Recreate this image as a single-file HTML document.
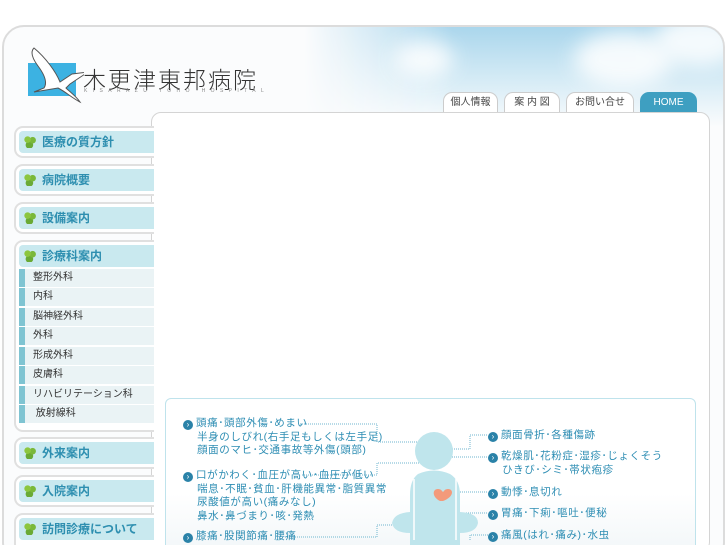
<!DOCTYPE html>
<html><head><meta charset="utf-8"><style>
*{margin:0;padding:0;box-sizing:border-box}
html,body{width:727px;height:545px;overflow:hidden}
body{background:#fff;font-family:"Liberation Sans","Noto Sans CJK JP",sans-serif;position:relative}
.frame{position:absolute;left:2px;top:25px;width:723px;height:540px;border:2px solid #dcdcdc;border-radius:22px;background:#fbfcfd;overflow:hidden}
.sky{position:absolute;left:300px;top:0;width:425px;height:100px;background:linear-gradient(180deg,#aad6ec 0%,#d3eaf5 50%,#fbfcfd 100%);-webkit-mask-image:linear-gradient(90deg,transparent 0,#000 35%);mask-image:linear-gradient(90deg,transparent 0,#000 35%)}
.cloud{position:absolute;border-radius:50%;background:#fff;filter:blur(10px);opacity:.85}
.logo{position:absolute;left:28px;top:63px;width:48px;height:33px;background:#3cb2e2}
.title{position:absolute;left:83px;top:61px;font-size:23px;letter-spacing:2px;color:#333;font-weight:300}
.sub{position:absolute;left:84px;top:88px;font-size:5px;letter-spacing:5.4px;color:#888}
.tab{position:absolute;top:92px;height:21px;border:1px solid #ccc;border-bottom:none;border-radius:9px 9px 0 0;background:#fff;font-size:10px;color:#444;text-align:center;line-height:20px}
.main{position:absolute;left:151px;top:112px;width:559px;height:440px;background:#fff;border:1px solid #d4d4d4;border-radius:10px}
.nav{position:absolute;left:14px;width:140px;border:2px solid #e0e0e0;border-right:none;border-radius:9px 0 0 9px;background:#fff;padding:3px 0 3px 3px}
.nav .h{height:22px;background:#c9e9ef;border-radius:4px 0 0 4px;color:#2e8fb0;font-weight:bold;font-size:12px;line-height:22px;padding-left:23px;position:relative}
.nav .h:before{content:"";position:absolute;left:5px;top:5px;width:12px;height:12px;background:radial-gradient(circle at 30% 30%,#8cc63f 3px,transparent 3.5px),radial-gradient(circle at 72% 35%,#7ab83a 3px,transparent 3.5px),radial-gradient(circle at 45% 75%,#6aaa35 3.5px,transparent 4px)}
.si{height:18px;margin-top:1.5px;background:#eaf3f5;border-left:6px solid #7fc4d2;font-size:10px;color:#333;line-height:18px;padding-left:8px}
.box{position:absolute;left:165px;top:398px;width:531px;height:160px;border:1.5px solid #bfe3ec;border-radius:6px;background:linear-gradient(180deg,#fff 60%,#f1f6f8)}
.t{position:absolute;font-size:10.5px;letter-spacing:.6px;color:#2d8db3;line-height:13.5px;white-space:nowrap}
.b{display:inline-block;width:10px;height:10px;border-radius:50%;background:#2a82a8;color:#fff;font-size:8px;line-height:10px;text-align:center;margin-right:3px;vertical-align:-1px;letter-spacing:0}
</style></head><body>
<div class="frame">
 <div class="sky"></div>
 <div class="cloud" style="left:570px;top:5px;width:100px;height:55px"></div>
 <div class="cloud" style="left:650px;top:-15px;width:90px;height:55px"></div>
 <div class="cloud" style="left:390px;top:15px;width:60px;height:35px"></div>
</div>
<div class="logo"></div>
<svg style="position:absolute;left:26px;top:44px" width="58" height="62" viewBox="0 0 58 62"><path d="M8 4 C4 8,6 14,12 22 C18 30,22 38,18 44 L8 48 L32 44 C40 48,46 54,54 58 C50 52,44 48,40 44 L44 40 L62 28 L46 30 L34 38 C30 28,20 14,8 4Z" fill="#fff" stroke="#555" stroke-width="1"/></svg>
<div class="title">木更津東邦病院</div>
<div class="sub">KISARAZU TOHO HOSPITAL</div>
<div class="tab" style="left:443px;width:55px">個人情報</div>
<div class="tab" style="left:504px;width:56px">案 内 図</div>
<div class="tab" style="left:566px;width:68px">お問い合せ</div>
<div class="tab" style="left:640px;width:57px;background:#3e9fc1;border-color:#3e9fc1;color:#fff">HOME</div>
<div class="main"></div>
<div class="nav" style="top:126px"><div class="h">医療の質方針</div></div>
<div class="nav" style="top:164px"><div class="h">病院概要</div></div>
<div class="nav" style="top:202px"><div class="h">設備案内</div></div>
<div class="nav" style="top:240px;height:192px"><div class="h">診療科案内</div>
<div class="si">整形外科</div><div class="si">内科</div><div class="si">脳神経外科</div><div class="si">外科</div><div class="si">形成外科</div><div class="si">皮膚科</div><div class="si">リハビリテーション科</div><div class="si">&nbsp;放射線科</div></div>
<div class="nav" style="top:437px"><div class="h">外来案内</div></div>
<div class="nav" style="top:475px"><div class="h">入院案内</div></div>
<div class="nav" style="top:513px;height:40px"><div class="h">訪問診療について</div></div>
<div class="box"></div>
<svg style="position:absolute;left:160px;top:395px" width="540" height="150">
<g stroke="#6fb6cf" stroke-width="1" stroke-dasharray="1,1" fill="none">
<path d="M140 29 H217 V47 H262"/><path d="M142 80 H217 V68 H262"/><path d="M125 142 H217 V130 H262"/>
<path d="M282 54 H310 V40 H328"/><path d="M282 62 H328"/><path d="M278 97 H328"/><path d="M282 118 H328"/><path d="M310 145 V140 H328"/>
</g>
<g fill="#bfe5ec">
<circle cx="274" cy="56" r="19"/>
<path d="M258 79 Q274 72 290 79 Q300 85 300 100 L300 117 Q318 118 318 128 Q316 138 300 138 L300 160 L250 160 L250 138 Q234 138 232 128 Q234 118 250 117 L250 100 Q250 85 258 79Z"/>
</g>
<path d="M254 84 V145 M296 84 V145" stroke="#fff" stroke-width="1.5"/>
<path d="M280 106 C272 102,272 94,278 94 C281 94,282 96,283 97 C284 96,285 94,288 94 C294 94,294 102,283 106Z" fill="#f39a7b"/>
</svg>
<div class="t" style="left:183px;top:417px"><span class="b">›</span>頭痛･頭部外傷･めまい<br>&nbsp;&nbsp;&nbsp;&nbsp;半身のしびれ(右手足もしくは左手足)<br>&nbsp;&nbsp;&nbsp;&nbsp;顔面のマヒ･交通事故等外傷(頭部)</div>
<div class="t" style="left:183px;top:469px"><span class="b">›</span>口がかわく･血圧が高い･血圧が低い<br>&nbsp;&nbsp;&nbsp;&nbsp;喘息･不眠･貧血･肝機能異常･脂質異常<br>&nbsp;&nbsp;&nbsp;&nbsp;尿酸値が高い(痛みなし)<br>&nbsp;&nbsp;&nbsp;&nbsp;鼻水･鼻づまり･咳･発熱</div>
<div class="t" style="left:183px;top:530px"><span class="b">›</span>膝痛･股関節痛･腰痛</div>
<div class="t" style="left:488px;top:429px"><span class="b">›</span>顔面骨折･各種傷跡</div>
<div class="t" style="left:488px;top:450px"><span class="b">›</span>乾燥肌･花粉症･湿疹･じょくそう<br>&nbsp;&nbsp;&nbsp;&nbsp;ひきび･シミ･帯状疱疹</div>
<div class="t" style="left:488px;top:486px"><span class="b">›</span>動悸･息切れ</div>
<div class="t" style="left:488px;top:507px"><span class="b">›</span>胃痛･下痢･嘔吐･便秘</div>
<div class="t" style="left:488px;top:529px"><span class="b">›</span>痛風(はれ･痛み)･水虫</div>
</body></html>
